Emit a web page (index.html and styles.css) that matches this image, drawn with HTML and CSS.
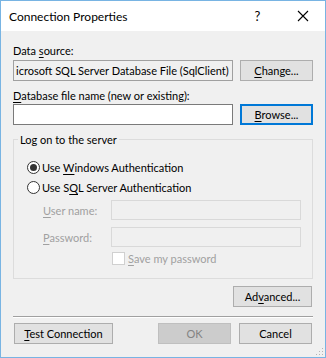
FILE: index.html
```html
<!DOCTYPE html>
<html lang="en">
<head>
    <meta charset="UTF-8">
    <title>Connection Properties</title>
    <link rel="stylesheet" href="styles.css">
</head>
<body>

<div class="window">
    <div class="titlebar">
        <div class="caption">Connection Properties</div>
        <div class="title-btn help">?</div>
        <div class="title-btn close">
            <svg width="12" height="12" viewBox="0 0 12 12"><path d="M1 1 L11 11 M11 1 L1 11" stroke="#000" stroke-width="1.1" fill="none"/></svg>
        </div>
    </div>

    <div class="content">
        <div class="label">Data <u>s</u>ource:</div>
        <div class="row">
            <div class="textbox readonly">icrosoft SQL Server Database File (SqlClient)</div>
            <button class="btn side"><u>C</u>hange...</button>
        </div>

        <div class="label second"><u>D</u>atabase file name (new or existing):</div>
        <div class="row">
            <div class="textbox"></div>
            <button class="btn side focused"><u>B</u>rowse...</button>
        </div>

        <fieldset class="group">
            <legend>Log on to the server</legend>
            <label class="radio-row">
                <span class="radio checked"></span>
                <span>Use <u>W</u>indows Authentication</span>
            </label>
            <label class="radio-row">
                <span class="radio"></span>
                <span>Use S<u>Q</u>L Server Authentication</span>
            </label>
            <div class="field-row">
                <span class="field-label"><u>U</u>ser name:</span>
                <div class="textbox disabled"></div>
            </div>
            <div class="field-row">
                <span class="field-label"><u>P</u>assword:</span>
                <div class="textbox disabled"></div>
            </div>
            <label class="check-row">
                <span class="checkbox"></span>
                <span><u>S</u>ave my password</span>
            </label>
        </fieldset>

        <div class="advanced-row">
            <button class="btn advanced">Ad<u>v</u>anced...</button>
        </div>

        <div class="separator"></div>

        <div class="footer">
            <button class="btn test"><u>T</u>est Connection</button>
            <div class="spacer"></div>
            <button class="btn ok" disabled>OK</button>
            <button class="btn cancel">Cancel</button>
        </div>
    </div>

    <svg class="grip" width="10" height="10" viewBox="0 0 10 10">
        <rect x="8" y="2" width="1" height="1" fill="#b5b5b5"/>
        <rect x="5" y="5" width="1" height="1" fill="#b5b5b5"/>
        <rect x="8" y="5" width="1" height="1" fill="#b5b5b5"/>
        <rect x="2" y="8" width="1" height="1" fill="#b5b5b5"/>
        <rect x="5" y="8" width="1" height="1" fill="#b5b5b5"/>
        <rect x="8" y="8" width="1" height="1" fill="#b5b5b5"/>
    </svg>
</div>

</body>
</html>
```

FILE: styles.css
```css
body {
    margin: 0;
    font-family: Lato, "Noto Sans", sans-serif;
    font-size: 11px;
    color: #000;
}
u {
    text-decoration-thickness: 1px;
    text-underline-offset: 2px;
}
.window {
    position: relative;
    box-sizing: border-box;
    width: 326px;
    height: 358px;
    border: 1px solid #78b4e3;
    background: #f0f0f0;
}
.titlebar {
    display: flex;
    align-items: center;
    height: 30px;
    background: #fff;
}
.caption {
    flex: 1;
    padding-left: 8px;
    font-size: 12px;
}
.title-btn {
    display: flex;
    align-items: center;
    justify-content: center;
    width: 45px;
    height: 30px;
}
.help {
    font-size: 13px;
}
.content {
    padding: 0 12px;
}
.label {
    height: 15px;
    line-height: 15px;
    margin-top: 12px;
    margin-bottom: 2px;
}
.label.second {
    margin-top: 7px;
    margin-bottom: 1px;
}
.row {
    display: flex;
    gap: 7px;
    height: 21px;
}
.textbox {
    box-sizing: border-box;
    flex: 1;
    height: 21px;
    border: 1px solid #7a7a7a;
    background: #fff;
    line-height: 19px;
    padding-left: 2px;
    white-space: nowrap;
    overflow: hidden;
}
.textbox.readonly {
    border-color: #a0a0a0;
    background: #f0f0f0;
}
.textbox.disabled {
    height: 20px;
    border-color: #d9d9d9;
    background: #f0f0f0;
}
.btn {
    box-sizing: border-box;
    height: 21px;
    border: 1px solid #adadad;
    background: #e1e1e1;
    font-family: inherit;
    font-size: 11px;
    color: #000;
    padding: 0;
}
.btn.side {
    width: 73px;
}
.btn.focused {
    border: 2px solid #0078d7;
}
.group {
    margin: 7px 0 0;
    padding: 0;
    height: 147px;
    box-sizing: border-box;
    border: 1px solid #dcdcdc;
}
.group legend {
    padding: 0 2px;
    margin-left: 4px;
    line-height: 15px;
}
.radio-row,
.check-row {
    display: flex;
    align-items: center;
    gap: 2px;
    height: 15px;
}
.radio-row {
    margin-left: 13px;
    margin-top: 13px;
}
.radio-row + .radio-row {
    margin-top: 5px;
}
.radio {
    box-sizing: border-box;
    width: 13px;
    height: 13px;
    border: 1px solid #333;
    border-radius: 50%;
    background: #fff;
    display: flex;
    align-items: center;
    justify-content: center;
}
.radio.checked::after {
    content: "";
    width: 7px;
    height: 7px;
    border-radius: 50%;
    background: #333;
}
.field-row {
    display: flex;
    align-items: center;
    height: 20px;
    margin-top: 5px;
    margin-right: 11px;
}
.field-row + .field-row {
    margin-top: 7px;
}
.field-label {
    width: 68px;
    padding-left: 29px;
    color: #a0a0a0;
}
.check-row {
    margin-left: 98px;
    margin-top: 4px;
    gap: 3px;
    color: #a0a0a0;
}
.checkbox {
    box-sizing: border-box;
    width: 13px;
    height: 13px;
    border: 1px solid #d0d0d0;
    background: #fff;
}
.advanced-row {
    display: flex;
    justify-content: flex-end;
    margin-top: 7px;
    padding-right: 1px;
}
.btn.advanced {
    width: 79px;
}
.separator {
    height: 0;
    border-top: 1px solid #a0a0a0;
    border-bottom: 1px solid #fff;
    margin-top: 9px;
}
.footer {
    display: flex;
    gap: 8px;
    margin-top: 5px;
    padding-left: 1px;
    padding-right: 1px;
}
.btn.test {
    width: 99px;
}
.spacer {
    flex: 1;
}
.btn.ok,
.btn.cancel {
    width: 73px;
}
.btn.ok {
    background: #cccccc;
    border-color: #bfbfbf;
    color: #838383;
}
.grip {
    position: absolute;
    right: 1px;
    bottom: 1px;
}
```
